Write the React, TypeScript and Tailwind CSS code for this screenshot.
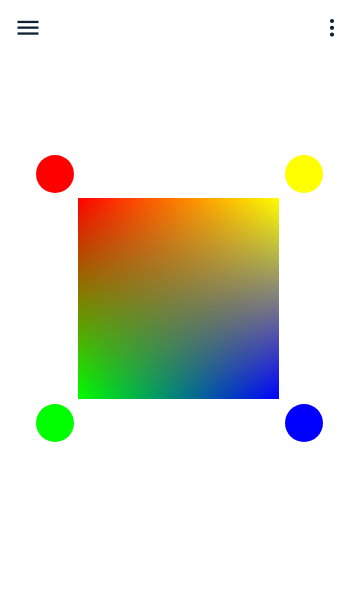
import React from "react";

function MenuIcon() {
  return (
    <svg width="24" height="24" viewBox="0 0 24 24" fill="none" aria-hidden="true">
      <rect x="1.5" y="3.8" width="21" height="2.3" fill="#0f2233" />
      <rect x="1.5" y="9.5" width="21" height="2.3" fill="#0f2233" />
      <rect x="1.5" y="15.4" width="21" height="2.3" fill="#0f2233" />
    </svg>
  );
}

function KebabIcon() {
  return (
    <svg width="24" height="24" viewBox="0 0 24 24" fill="none" aria-hidden="true">
      <circle cx="12" cy="5" r="2.1" fill="#0f2233" />
      <circle cx="12" cy="11.8" r="2.1" fill="#0f2233" />
      <circle cx="12" cy="18.6" r="2.1" fill="#0f2233" />
    </svg>
  );
}

function Dot({ color }: { color: string }) {
  return <div className="h-[38px] w-[38px] rounded-full" style={{ backgroundColor: color }} />;
}

function ColorSquare() {
  return (
    <div className="relative h-[201px] w-[201px] overflow-hidden">
      <div className="absolute inset-0 bg-[linear-gradient(to_right,#00ff00,#0000ff)]" />
      <div className="absolute inset-0 bg-[linear-gradient(to_right,#ff0000,#ffff00)] [mask-image:linear-gradient(to_bottom,black,transparent)]" />
    </div>
  );
}

export default function App() {
  return (
    <main className="min-h-[600px] w-[360px] bg-white font-['Roboto',sans-serif]">
      <header className="flex h-14 items-center justify-between pl-[16px] pr-[16px]">
        <button className="flex h-6 w-6 items-center justify-center pt-[1px]" aria-label="Menu">
          <MenuIcon />
        </button>
        <button className="flex h-6 w-6 items-center justify-center" aria-label="More">
          <KebabIcon />
        </button>
      </header>

      <div className="ml-[36px] mt-[99px] grid grid-cols-[38px_4px_201px_6px_38px] grid-rows-[38px_201px_38px] gap-y-[5px]">
        <Dot color="#ff0000" />
        <div />
        <div />
        <div />
        <Dot color="#ffff00" />
        <div />
        <div />
        <ColorSquare />
        <div />
        <div />
        <Dot color="#00ff00" />
        <div />
        <div />
        <div />
        <Dot color="#0000ff" />
      </div>
    </main>
  );
}
